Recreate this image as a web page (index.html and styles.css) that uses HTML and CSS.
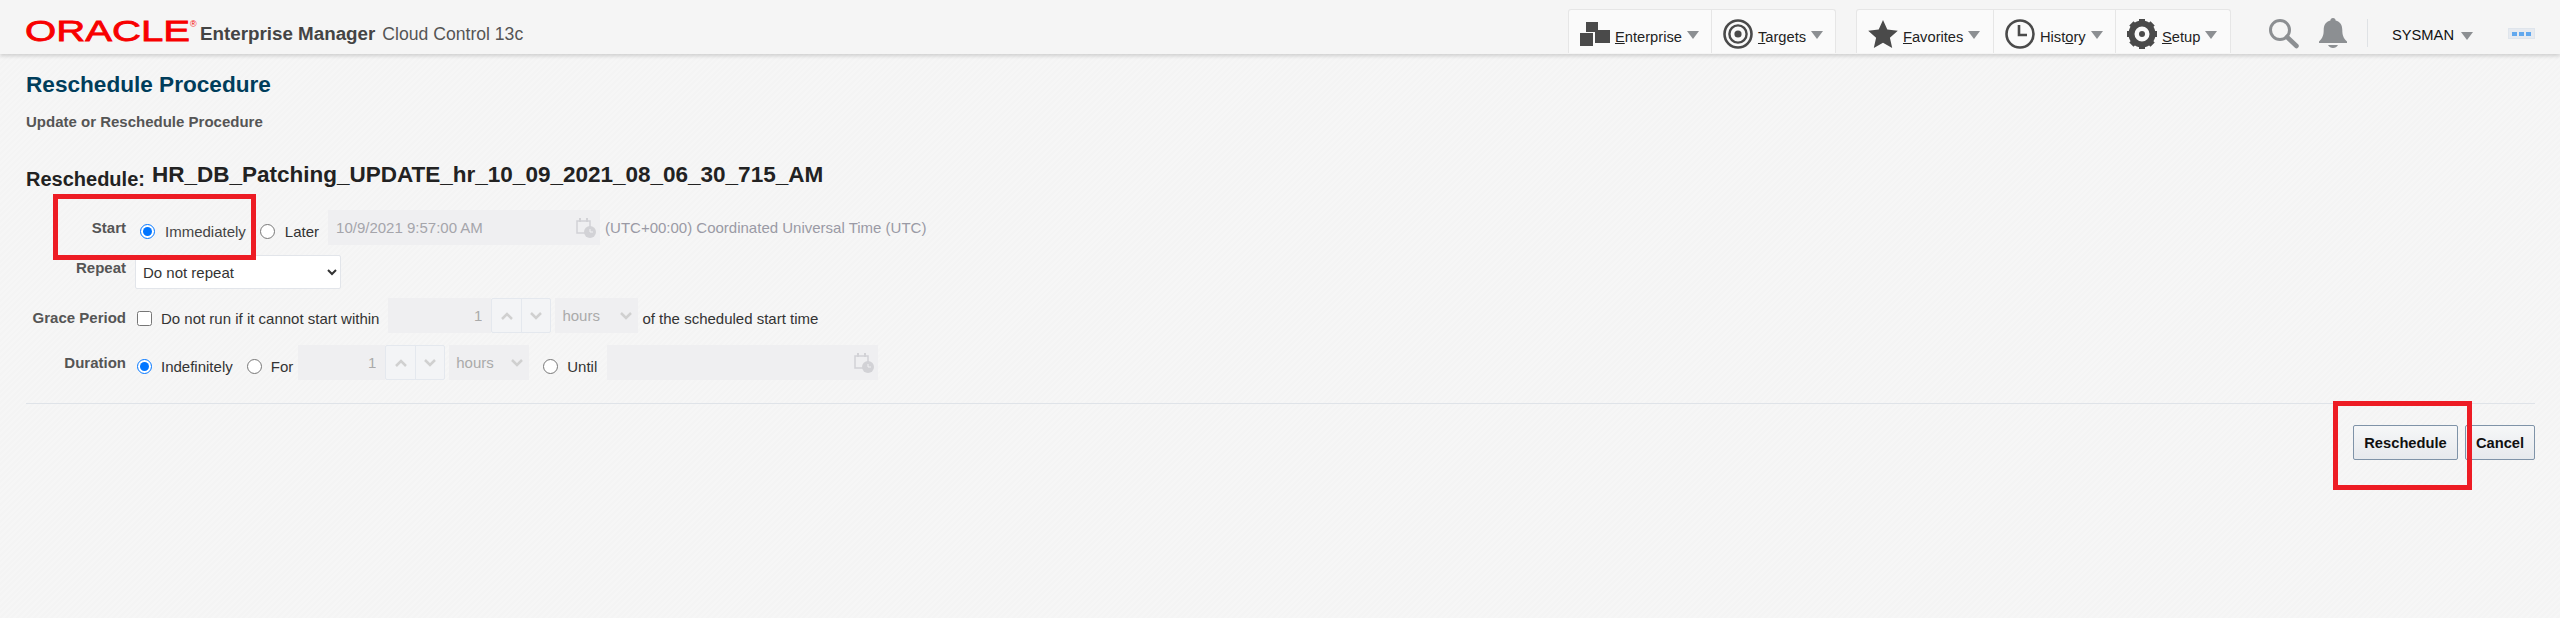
FILE: index.html
```html
<!DOCTYPE html>
<html>
<head>
<meta charset="utf-8" />
<title>Reschedule Procedure</title>
<link rel="stylesheet" href="styles.css">
</head>
<body>
	<div id="header">
		<svg class="oracle" width="172" height="36" viewBox="0 0 172 36"><text x="0" y="29" textLength="165" lengthAdjust="spacingAndGlyphs">ORACLE</text><text class="reg" x="165" y="15">®</text></svg>
		<span class="product"><b>Enterprise Manager</b></span>
		<span class="cloud">Cloud Control 13c</span>
		<div class="nav-group first">
			<a class="nav-item w-ent">
				<svg width="30" height="26" viewBox="0 0 30 26"><path fill="#4a4a4a" d="M6 1h12v10H6zM0 12h13v13H0zM15 9h15v13H15z"/></svg>
				<span><u>E</u>nterprise</span><i class="caret"></i>
			</a>
			<a class="nav-item w-tar">
				<svg width="30" height="30" viewBox="0 0 30 30"><g fill="none" stroke="#4a4a4a"><circle cx="15" cy="15" r="13.5" stroke-width="2.6"/><circle cx="15" cy="15" r="8.6" stroke-width="2.4"/></g><circle cx="15" cy="15" r="3.6" fill="#4a4a4a"/></svg>
				<span><u>T</u>argets</span><i class="caret"></i>
			</a>
		</div>
		<div class="nav-group">
			<a class="nav-item w-fav">
				<svg width="30" height="30" viewBox="0 0 30 30"><path fill="#4a4a4a" d="M15 1l4.3 9.6 10.5 1.1-7.9 7 2.3 10.3L15 23.700 5.800 29l2.300-10.300-7.900-7 10.500-1.100z"/></svg>
				<span><u>F</u>avorites</span><i class="caret"></i>
			</a>
			<a class="nav-item w-his">
				<svg width="30" height="30" viewBox="0 0 30 30"><circle cx="15" cy="15" r="13.5" fill="none" stroke="#4a4a4a" stroke-width="2.6"/><path fill="none" stroke="#4a4a4a" stroke-width="2.6" d="M14 6v10h8"/></svg>
				<span>Hist<u>o</u>ry</span><i class="caret"></i>
			</a>
			<a class="nav-item w-set">
				<svg width="30" height="30" viewBox="0 0 30 30"><circle cx="15" cy="15" r="10.500" fill="none" stroke="#4a4a4a" stroke-width="6"/><g stroke="#4a4a4a" stroke-width="6"><path d="M15 0v6M15 24v6M0 15h6M24 15h6M4.400 4.400l4.200 4.200M21.400 21.400l4.200 4.200M4.400 25.600l4.200-4.200M21.400 8.600l4.200-4.200"/></g><circle cx="15" cy="15" r="3" fill="#4a4a4a"/></svg>
				<span><u>S</u>etup</span><i class="caret"></i>
			</a>
		</div>
		<svg class="search" width="31" height="31" viewBox="0 0 31 31"><circle cx="12" cy="12" r="9.5" fill="none" stroke="#8c8f92" stroke-width="3"/><path stroke="#8c8f92" stroke-width="4.5" stroke-linecap="round" d="M19 19l9.5 9"/></svg>
		<svg class="bell" width="28" height="30" viewBox="0 0 28 30"><path fill="#8c8f92" d="M14 0c1.600 0 2.600 1 2.600 2.600 4.600 1 6.700 4.600 6.700 9.400 0 5 1 8 4.700 11.600V25H0v-1.400C3.700 20 4.700 17 4.700 12c0-4.800 2.100-8.400 6.700-9.400C11.400 1 12.400 0 14 0zM9 27h10c-1 1.900-3 3-5 3s-4-1.100-5-3z"/></svg>
		<div class="sep"></div>
		<a class="user">SYSMAN<i class="caret"></i></a>
		<div class="dots"><i></i><i></i><i></i></div>
	</div>

	<div id="content">
		<h1>Reschedule Procedure</h1>
		<h2>Update or Reschedule Procedure</h2>
		<div class="sched-title"><span class="sched-label">Reschedule:</span><span class="sched-name">HR_DB_Patching_UPDATE_hr_10_09_2021_08_06_30_715_AM</span></div>

		<div class="row row-start">
			<label class="lbl">Start</label>
			<span class="opt o-imm"><input type="radio" name="start" checked><span>Immediately</span></span>
			<span class="opt o-later"><input type="radio" name="start"><span>Later</span></span>
			<div class="date date-start">10/9/2021 9:57:00 AM
				<svg class="cal" width="20" height="20" viewBox="0 0 20 20"><use href="#calicon"/></svg>
			</div>
			<span class="tz">(UTC+00:00) Coordinated Universal Time (UTC)</span>
		</div>

		<div class="row row-repeat">
			<label class="lbl">Repeat</label>
			<select class="repeat"><option>Do not repeat</option></select>
		</div>

		<div class="row row-grace">
			<label class="lbl">Grace Period</label>
			<span class="opt o-chk"><input type="checkbox"><span>Do not run if it cannot start within</span></span>
			<input class="num num-grace" type="text" value="1" disabled>
			<div class="spin"><b><svg width="12" height="8" viewBox="0 0 12 8"><path d="M1 7l5-5 5 5"/></svg></b><b><svg width="12" height="8" viewBox="0 0 12 8"><path d="M1 1l5 5 5-5"/></svg></b></div>
			<div class="unit unit-grace">hours<svg width="12" height="8" viewBox="0 0 12 8"><path d="M1 1l5 5 5-5"/></svg></div>
			<span class="after">of the scheduled start time</span>
		</div>

		<div class="row row-dur">
			<label class="lbl">Duration</label>
			<span class="opt o-ind"><input type="radio" name="dur" checked><span>Indefinitely</span></span>
			<span class="opt o-for"><input type="radio" name="dur"><span>For</span></span>
			<input class="num num-dur" type="text" value="1" disabled>
			<div class="spin"><b><svg width="12" height="8" viewBox="0 0 12 8"><path d="M1 7l5-5 5 5"/></svg></b><b><svg width="12" height="8" viewBox="0 0 12 8"><path d="M1 1l5 5 5-5"/></svg></b></div>
			<div class="unit unit-dur">hours<svg width="12" height="8" viewBox="0 0 12 8"><path d="M1 1l5 5 5-5"/></svg></div>
			<span class="opt o-until"><input type="radio" name="dur"><span>Until</span></span>
			<div class="date date-until">
				<svg class="cal" width="20" height="20" viewBox="0 0 20 20"><use href="#calicon"/></svg>
			</div>
		</div>

		<div class="rule"></div>
		<div class="buttons">
			<button class="btn btn-res">Reschedule</button>
			<button class="btn btn-can">Cancel</button>
		</div>
	</div>

	<div class="mark mark-start"></div>
	<div class="mark mark-btn"></div>

	<svg width="0" height="0" class="defs"><defs><g id="calicon"><path fill="none" stroke="#d2d2d6" stroke-width="1.500" d="M1 3h13v12H1z"/><path stroke="#d2d2d6" stroke-width="2" d="M4 0v4M11 0v4"/><circle cx="14" cy="14" r="6" fill="#d2d2d6"/><path fill="none" stroke="#f0f0f2" d="M14 11v3h3"/></g></defs></svg>
</body>
</html>
```

FILE: styles.css
```css
* {
	margin: 0;
	padding: 0;
	box-sizing: border-box;
}
html,body {
	width: 100%;
	height: 100%;
	overflow: hidden;
}
body {
	font-family: "Liberation Sans", Arial, sans-serif;
	font-size: 15px;
	color: #333;
	background: repeating-linear-gradient(135deg, #f4f4f4 0, #f4f4f4 2px, #f6f6f6 2px, #f6f6f6 4px);
}

/* header */
#header {
	height: 54px;
	display: flex;
	align-items: flex-start;
	background: #f5f5f5;
	box-shadow: 0 2px 4px rgba(0,0,0,.16);
	white-space: nowrap;
}
.oracle {
	margin: 12px 0 0 25px;
	flex: none;
}
.oracle text {
	font-family: "Liberation Sans", Arial, sans-serif;
	font-size: 30px;
	fill: #f80000;
	stroke: #f80000;
	stroke-width: .8px;
}
.oracle .reg {
	font-size: 9px;
	stroke-width: 0;
}
.product {
	margin: 24px 0 0 3px;
	font-size: 18.800px;
	line-height: 20px;
	color: #444;
}
.cloud {
	margin: 24px 0 0 7px;
	font-size: 17.600px;
	line-height: 20px;
	color: #555;
}
.nav-group {
	display: flex;
	height: 44px;
	margin: 9px 0 0 20px;
	background: #fafafa;
	border: 1px solid #e6e6e6;
	border-bottom: 0;
	border-radius: 3px 3px 0 0;
}
.nav-group.first {
	margin-left: auto;
}
.nav-item {
	display: flex;
	align-items: center;
	padding: 4px 0 0 11px;
	color: #222;
	border-right: 1px solid #e6e6e6;
}
.nav-item:last-child {
	border-right: 0;
}
.nav-item span {
	margin: 6px 0 0 5px;
	font-size: 14.700px;
}
.w-ent { width: 143px; }
.w-tar { width: 123px; }
.w-fav { width: 137px; }
.w-his { width: 122px; }
.w-set { width: 114px; }
.caret {
	display: block;
	width: 0;
	height: 0;
	margin: 2px 0 0 5px;
	border-left: 6px solid transparent;
	border-right: 6px solid transparent;
	border-top: 8px solid #8c8f92;
}
.search {
	margin: 18px 0 0 37px;
	flex: none;
}
.bell {
	margin: 18px 0 0 20px;
	flex: none;
}
.sep {
	width: 1px;
	height: 28px;
	margin: 19px 0 0 20px;
	background: #dfe2e5;
}
.user {
	display: flex;
	align-items: center;
	margin: 26px 0 0 24px;
	font-size: 14.700px;
	line-height: 18px;
	color: #111;
}
.user .caret {
	margin-left: 7px;
}
.dots {
	display: flex;
	gap: 2px;
	align-items: center;
	justify-content: center;
	width: 27px;
	height: 11px;
	margin: 28px 25px 0 35px;
	background: #e6eaf0;
	border: 1px solid #dfe5ec;
}
.dots i {
	width: 5px;
	height: 4px;
	background: #61a8ee;
}

/* page body */
#content {
	padding: 18px 25px 0 26px;
}
h1 {
	font-size: 22.600px;
	line-height: 26px;
	color: #003d5b;
}
h2 {
	margin-top: 13px;
	font-size: 15px;
	line-height: 22px;
	color: #555;
}
.sched-title {
	display: flex;
	align-items: flex-end;
	height: 26px;
	margin-top: 30px;
}
.sched-label {
	font-size: 20px;
	font-weight: bold;
	line-height: 20px;
	color: #222;
}
.sched-name {
	margin: 0 0 2px 7px;
	font-size: 22.500px;
	font-weight: bold;
	line-height: 24px;
	color: #222;
}

/* form rows */
.row {
	display: flex;
	align-items: flex-start;
	height: 35px;
	white-space: nowrap;
}
.row-start { margin-top: 21px; }
.row-repeat { margin-top: 10px; height: 34px; }
.row-grace { margin-top: 9px; }
.row-dur { margin-top: 12px; }
.lbl {
	width: 100px;
	padding-top: 9px;
	font-size: 15px;
	font-weight: bold;
	line-height: 18px;
	text-align: right;
	color: #555;
}
.row-repeat .lbl { padding-top: 4px; }
.row-grace .lbl { padding-top: 11px; }
.opt {
	display: flex;
	align-items: center;
	height: 35px;
	padding-top: 7px;
}
.opt input {
	width: 15px;
	height: 15px;
	margin: 0;
	flex: none;
	accent-color: #0075ff;
}
.opt span {
	margin-left: 10px;
}
.row-start .o-imm { margin-left: 14px; }
.o-imm span { color: #444; }
.o-later { margin-left: 14px; }
.date {
	display: flex;
	align-items: center;
	justify-content: space-between;
	height: 35px;
	padding: 0 4px 0 8px;
	background: #efeff1;
	color: #a5a5ab;
}
.date-start { width: 272px; margin-left: 9px; }
.date-until { width: 271px; margin-left: 10px; justify-content: flex-end; }
.cal { flex: none; }
.defs { position: absolute; }
.tz {
	margin-left: 5px;
	line-height: 35px;
	color: #9a9aa5;
}
.repeat {
	width: 206px;
	height: 34px;
	margin-left: 9px;
	padding-left: 3px;
	font-family: "Liberation Sans", Arial, sans-serif;
	font-size: 15px;
	color: #333;
	background: #fff;
	border: 1px solid #e2e5ea;
	border-radius: 2px;
}
.o-chk { margin-left: 11px; padding-top: 5px; }
.o-chk span { margin-left: 9px; }
.num {
	height: 35px;
	padding-right: 9px;
	font-family: "Liberation Sans", Arial, sans-serif;
	font-size: 15px;
	text-align: right;
	color: #aaa;
	background: #efeff1;
	border: 0;
}
.num-grace { width: 103px; margin-left: 9px; }
.num-dur { width: 87px; margin-left: 5px; }
.spin {
	display: flex;
	width: 60px;
	height: 35px;
	background: #f3f4f6;
	border: 1px solid #e4e8ee;
	border-radius: 2px;
}
.spin b {
	display: flex;
	align-items: center;
	justify-content: center;
	width: 30px;
}
.spin b + b {
	border-left: 1px solid #e4e8ee;
}
.spin svg, .unit svg {
	fill: none;
	stroke: #d0d0d0;
	stroke-width: 2.500px;
}
.unit {
	display: flex;
	align-items: center;
	justify-content: space-between;
	height: 35px;
	margin-left: 4px;
	padding: 0 6px 0 7px;
	color: #aaa;
	background: #efeff1;
}
.unit-grace { width: 83px; }
.unit-dur { width: 80px; }
.after {
	margin-left: 4px;
	padding-top: 3px;
	line-height: 35px;
}
.o-ind { margin-left: 11px; }
.o-ind span { margin-left: 9px; }
.o-for { margin-left: 14px; }
.o-for span { margin-left: 9px; }
.o-until { margin-left: 14px; }
.o-until span { margin-left: 9px; }

/* footer */
.rule {
	height: 1px;
	margin-top: 23px;
	background: #dfe3e8;
}
.buttons {
	display: flex;
	justify-content: flex-end;
	gap: 7px;
	margin-top: 21px;
}
.btn {
	height: 35px;
	font-family: "Liberation Sans", Arial, sans-serif;
	font-size: 14.700px;
	font-weight: bold;
	color: #111;
	background: linear-gradient(#f6f7f8, #e6e9ed);
	border: 1px solid #7f93a8;
	border-radius: 2px;
}
.btn-res { width: 105px; }
.btn-can { width: 70px; }

/* red annotations drawn over the screenshot */
.mark {
	position: absolute;
	border: 5px solid #ed1c24;
}
.mark-start {
	left: 53px;
	top: 194px;
	width: 203px;
	height: 66px;
}
.mark-btn {
	left: 2333px;
	top: 401px;
	width: 139px;
	height: 89px;
}
```
